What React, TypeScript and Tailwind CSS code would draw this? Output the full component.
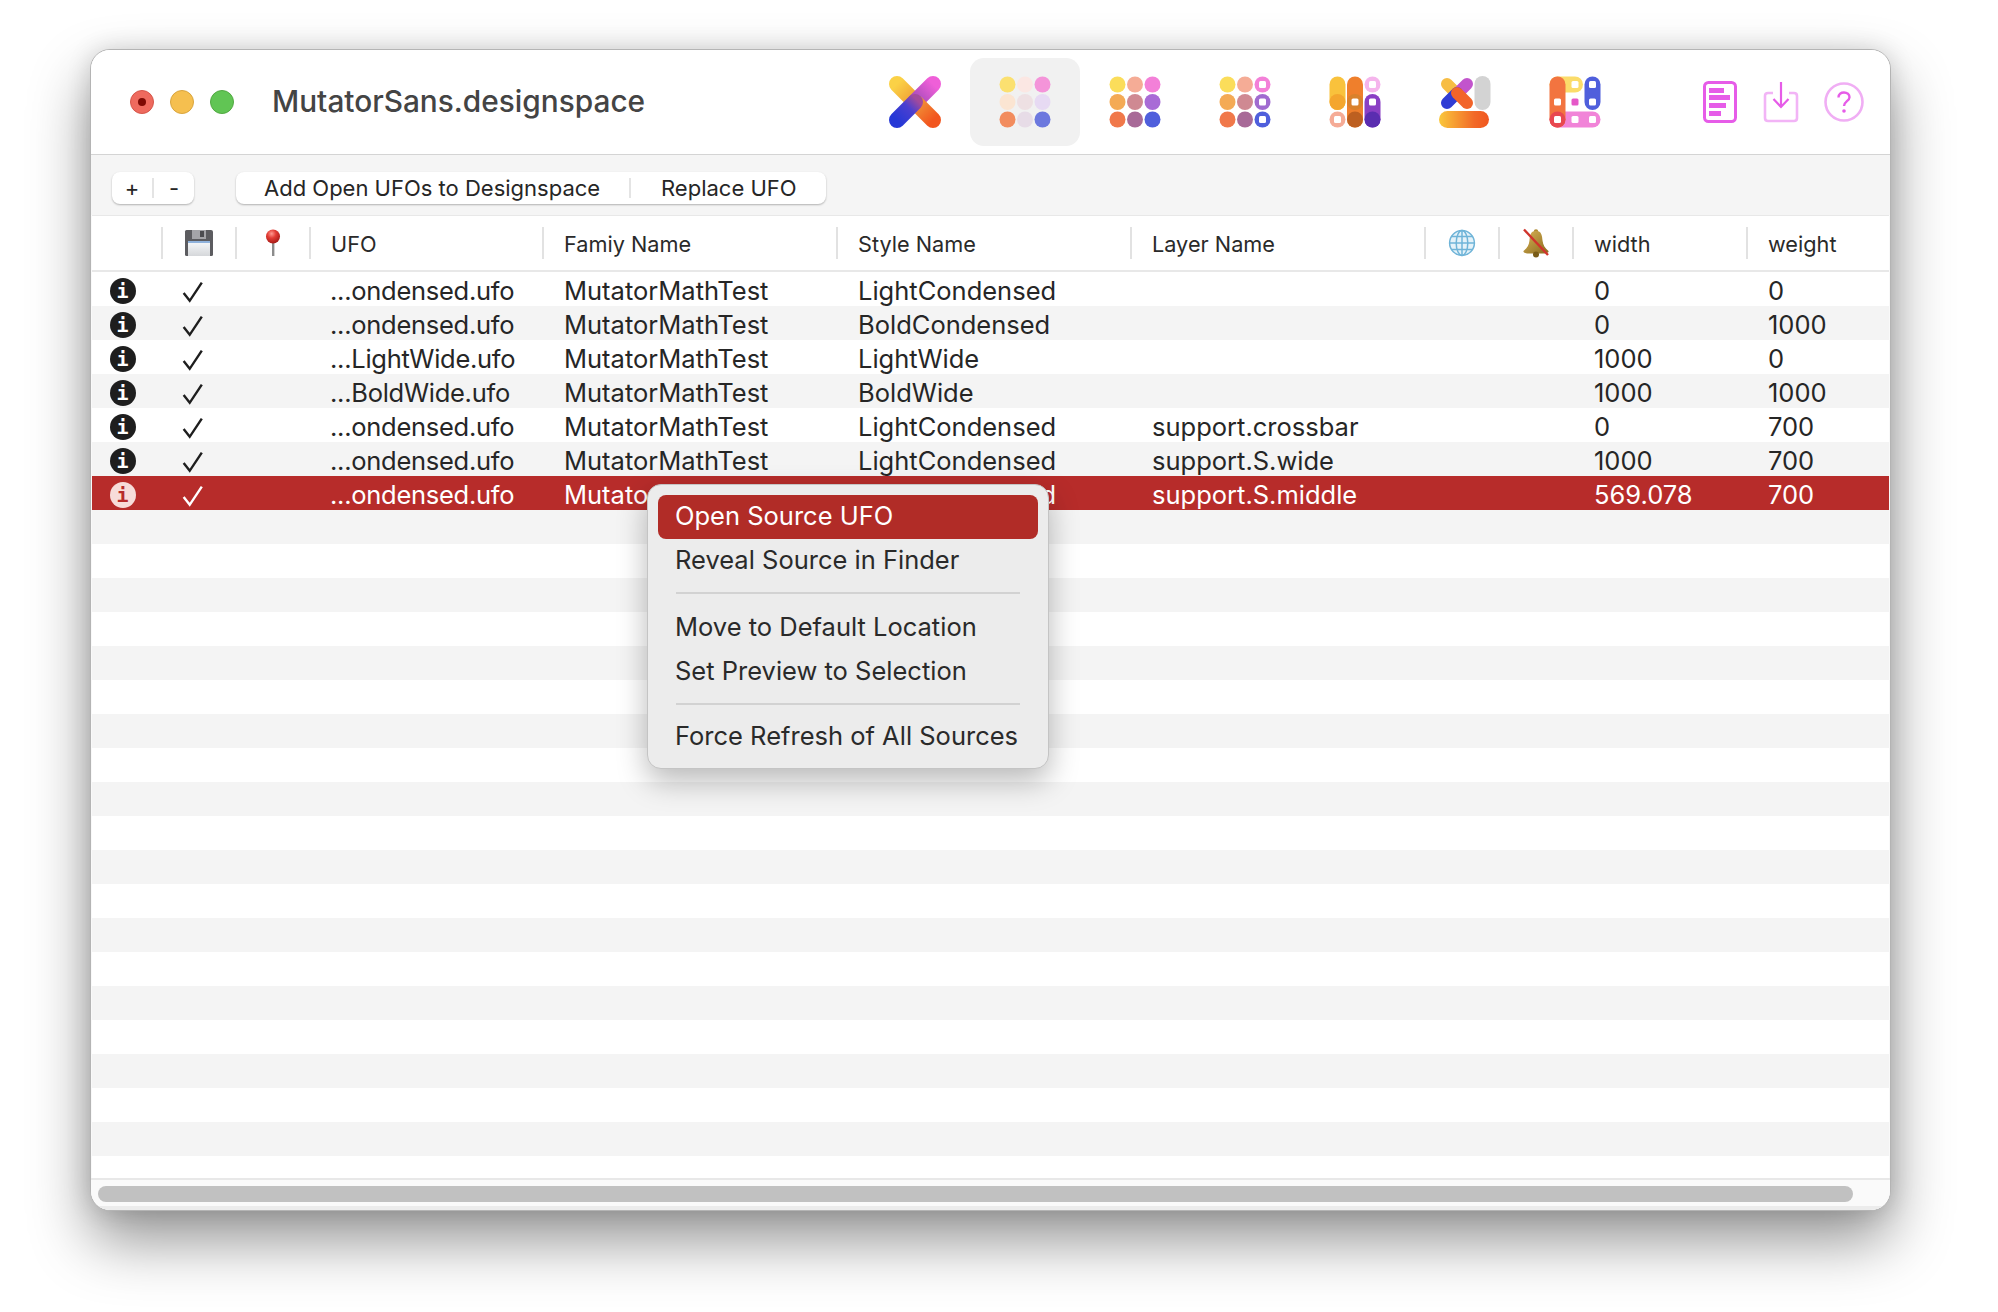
const sans = "font-['Inter','Liberation_Sans',sans-serif]"
const gridCols = 'grid-cols-[69px_74px_74px_233px_294px_294px_294px_74px_74px_174px_1fr]'

const sources = [
  ['...ondensed.ufo', 'MutatorMathTest', 'LightCondensed', '', '0', '0'],
  ['...ondensed.ufo', 'MutatorMathTest', 'BoldCondensed', '', '0', '1000'],
  ['...LightWide.ufo', 'MutatorMathTest', 'LightWide', '', '1000', '0'],
  ['...BoldWide.ufo', 'MutatorMathTest', 'BoldWide', '', '1000', '1000'],
  ['...ondensed.ufo', 'MutatorMathTest', 'LightCondensed', 'support.crossbar', '0', '700'],
  ['...ondensed.ufo', 'MutatorMathTest', 'LightCondensed', 'support.S.wide', '1000', '700'],
  ['...ondensed.ufo', 'MutatorMathTest', 'LightCondensed', 'support.S.middle', '569.078', '700'],
]

const DOTS = [8.5, 26, 43.5]

function Dots({ colors, rings = [] }: { colors: string[]; rings?: number[] }) {
  return (
    <svg width="52" height="52" viewBox="0 0 52 52">
      {colors.map((c, i) => {
        const x = DOTS[i % 3]
        const y = DOTS[Math.floor(i / 3)]
        return (
          <g key={i}>
            <circle cx={x} cy={y} r="8" fill={c} />
            {rings.includes(i) && <rect x={x - 3.5} y={y - 3.5} width="7" height="7" rx="1.5" fill="#fff" />}
          </g>
        )
      })}
    </svg>
  )
}

function Pill({ x1, y1, x2, y2, c, w = 16 }: { x1: number; y1: number; x2: number; y2: number; c: string; w?: number }) {
  return <line x1={x1} y1={y1} x2={x2} y2={y2} stroke={c} strokeWidth={w} strokeLinecap="round" />
}

function Hole({ x, y }: { x: number; y: number }) {
  return <rect x={x - 3.5} y={y - 3.5} width="7" height="7" rx="1.5" fill="#fff" />
}

function XLogo() {
  return (
    <svg width="52" height="52" viewBox="0 0 52 52">
      <defs>
        <linearGradient id="xa" gradientUnits="userSpaceOnUse" x1="8" y1="8" x2="26" y2="26">
          <stop offset="0" stopColor="#fbd146" />
          <stop offset="1" stopColor="#ef9a32" />
        </linearGradient>
        <linearGradient id="xb" gradientUnits="userSpaceOnUse" x1="44" y1="8" x2="26" y2="26">
          <stop offset="0" stopColor="#ef5fd8" />
          <stop offset="1" stopColor="#a04ab8" />
        </linearGradient>
        <linearGradient id="xc" gradientUnits="userSpaceOnUse" x1="8" y1="44" x2="28" y2="24">
          <stop offset="0" stopColor="#2638d6" />
          <stop offset="0.6" stopColor="#4a3fd0" />
          <stop offset="1" stopColor="#a24a9c" />
        </linearGradient>
        <linearGradient id="xd" gradientUnits="userSpaceOnUse" x1="44" y1="44" x2="26" y2="26">
          <stop offset="0" stopColor="#f2561f" />
          <stop offset="1" stopColor="#f09a3a" />
        </linearGradient>
      </defs>
      <Pill x1={8} y1={8} x2={26} y2={26} c="url(#xa)" />
      <Pill x1={44} y1={8} x2={26} y2={26} c="url(#xb)" />
      <Pill x1={44} y1={44} x2={27} y2={27} c="url(#xd)" />
      <Pill x1={8} y1={44} x2={26} y2={26} c="url(#xc)" />
    </svg>
  )
}

function Columns() {
  return (
    <svg width="52" height="52" viewBox="0 0 52 52">
      <Pill x1={8.5} y1={8.5} x2={8.5} y2={26} c="#f9c23c" />
      <circle cx={8.5} cy={26} r="8" fill="#f4a62e" />
      <circle cx={8.5} cy={43.5} r="8" fill="#f5ab96" />
      <Hole x={8.5} y={43.5} />
      <Pill x1={26} y1={8.5} x2={26} y2={43.5} c="#ef7f2c" />
      <circle cx={26} cy={26} r="8" fill="#d9812c" />
      <circle cx={26} cy={43.5} r="8" fill="#bd5f20" />
      <Hole x={26} y={26} />
      <circle cx={43.5} cy={8.5} r="8" fill="#f5b5ec" />
      <Hole x={43.5} y={8.5} />
      <Pill x1={43.5} y1={26} x2={43.5} y2={43.5} c="#8a3fc4" />
      <circle cx={43.5} cy={43.5} r="8" fill="#5a2db0" />
      <Hole x={43.5} y={26} />
    </svg>
  )
}

function XBars() {
  return (
    <svg width="52" height="52" viewBox="0 0 52 52">
      <defs>
        <linearGradient id="bar" x1="0" x2="1" y1="0" y2="0">
          <stop offset="0" stopColor="#fac83c" />
          <stop offset="0.7" stopColor="#f26a28" />
          <stop offset="1" stopColor="#f0561f" />
        </linearGradient>
      </defs>
      <Pill x1={8} y1={8} x2={18} y2={18} c="#f7bd44" w={12} />
      <Pill x1={28} y1={8} x2={18} y2={18} c="#c254cc" w={12} />
      <Pill x1={8} y1={27} x2={18} y2={17} c="#2f3cd4" w={12} />
      <Pill x1={28} y1={27} x2={18} y2={17} c="#f2642a" w={12} />
      <Pill x1={43.5} y1={8} x2={43.5} y2={26} c="#d3d3d3" />
      <rect x="0" y="35" width="50" height="17" rx="8.5" fill="url(#bar)" />
    </svg>
  )
}

function Blocks() {
  return (
    <svg width="52" height="52" viewBox="0 0 52 52">
      <Pill x1={26} y1={8.5} x2={8.5} y2={8.5} c="#fbdc6a" />
      <Pill x1={43.5} y1={8.5} x2={43.5} y2={26} c="#4f5fdc" />
      <Pill x1={8.5} y1={43.5} x2={43.5} y2={43.5} c="#f184d8" />
      <Pill x1={8.5} y1={8.5} x2={8.5} y2={43.5} c="#f27440" />
      <circle cx={8.5} cy={43.5} r="8" fill="#e84850" />
      <Hole x={26} y={8.5} />
      <Hole x={43.5} y={8.5} />
      <Hole x={43.5} y={26} />
      <Hole x={8.5} y={26} />
      <Hole x={8.5} y={43.5} />
      <Hole x={26} y={43.5} />
      <Hole x={43.5} y={43.5} />
      <rect x="22.5" y="22.5" width="7" height="7" rx="1.5" fill="#e558c8" />
    </svg>
  )
}

function ToolTile({ active, children }: { active?: boolean; children: React.ReactNode }) {
  return (
    <div className={`w-[110px] h-[88px] rounded-[14px] flex items-center justify-center ${active ? 'bg-[#f1f1f1]' : ''}`}>
      <div className="blur-[0.6px]">{children}</div>
    </div>
  )
}

function FloppyIcon() {
  return (
    <svg width="30" height="28" viewBox="0 0 30 28">
      <defs>
        <linearGradient id="fl" x1="0" x2="0" y1="0" y2="1">
          <stop offset="0" stopColor="#f8fafc" />
          <stop offset="1" stopColor="#d5d7da" />
        </linearGradient>
      </defs>
      <path d="M1 2.5 Q1 1 2.5 1 H27 Q29 1 29 3 V25.5 Q29 27 27.5 27 H2.5 Q1 27 1 25.5 Z" fill="#5c5c60" />
      <rect x="8" y="1" width="14" height="9" fill="#a4a4a8" />
      <rect x="16" y="2" width="4" height="6" fill="#4c4c50" />
      <rect x="4" y="12" width="22" height="15" fill="url(#fl)" />
      <rect x="4" y="12" width="22" height="2" fill="#8fb2dc" />
    </svg>
  )
}

function PinIcon() {
  return (
    <svg width="18" height="28" viewBox="0 0 18 28">
      <defs>
        <radialGradient id="pin" cx="0.4" cy="0.3" r="0.7">
          <stop offset="0" stopColor="#ff9a90" />
          <stop offset="0.45" stopColor="#e23c34" />
          <stop offset="1" stopColor="#a81c18" />
        </radialGradient>
      </defs>
      <rect x="8" y="12" width="2.4" height="15" fill="#8c8c8c" />
      <circle cx="9" cy="7.5" r="7" fill="url(#pin)" />
    </svg>
  )
}

function GlobeIcon() {
  return (
    <svg width="28" height="28" viewBox="0 0 28 28" fill="none" stroke="#6fb4d8" strokeWidth="1.5">
      <circle cx="14" cy="14" r="12.4" fill="#e4f2f9" />
      <ellipse cx="14" cy="14" rx="5.8" ry="12.4" />
      <line x1="14" y1="1.6" x2="14" y2="26.4" />
      <line x1="1.6" y1="14" x2="26.4" y2="14" />
      <path d="M3.4 7.6 H24.6 M3.4 20.4 H24.6" />
    </svg>
  )
}

function BellOffIcon() {
  return (
    <svg width="30" height="30" viewBox="0 0 30 30">
      <defs>
        <linearGradient id="bell" x1="0" x2="1" y1="0" y2="1">
          <stop offset="0" stopColor="#d8b255" />
          <stop offset="1" stopColor="#8a6a1e" />
        </linearGradient>
      </defs>
      <circle cx="15" cy="3.5" r="2.2" fill="#b08a30" />
      <path d="M15 3 C9 3 9 8 8.4 13 C8 17 6 20 2.5 23 C2 24.5 4 25 6 25.5 H24 C26 25 28 24.5 27.5 23 C24 20 22 17 21.6 13 C21 8 21 3 15 3 Z" fill="url(#bell)" />
      <circle cx="15" cy="26.5" r="3" fill="#7a5c18" />
      <line x1="3" y1="1.5" x2="27" y2="27" stroke="#d0342c" strokeWidth="2.4" />
    </svg>
  )
}

function InfoBadge({ selected }: { selected: boolean }) {
  return (
    <span className={`w-[26px] h-[26px] rounded-full flex items-center justify-center text-[20px] font-bold font-['DejaVu_Sans_Mono',monospace] leading-none ${selected ? 'bg-[#f7dcd9] text-[#b72c2a]' : 'bg-[#1e1e1e] text-white'}`}>
      i
    </span>
  )
}

function Check({ selected }: { selected: boolean }) {
  return (
    <svg width="22" height="22" viewBox="0 0 20 20" fill="none" stroke={selected ? '#fff' : '#1e1e1e'} strokeWidth="2.2">
      <path d="M1.5 11 L7 18 L18 1.5" />
    </svg>
  )
}

function HeaderCell({ children, center }: { children?: React.ReactNode; center?: boolean }) {
  return (
    <div className="flex items-center h-full">
      <span className="w-[2px] h-[32px] bg-[#e2e2e2] shrink-0" />
      {center ? (
        <span className="flex-1 flex items-center justify-center">{children}</span>
      ) : (
        <span className="ml-[20px]">{children}</span>
      )}
    </div>
  )
}

function Button({ children, className = '' }: { children: React.ReactNode; className?: string }) {
  return (
    <div className={`h-[32px] rounded-[8px] bg-white shadow-[0_1px_2px_rgba(0,0,0,0.28)] flex items-center text-[22px] text-[#262626] ${className}`}>
      {children}
    </div>
  )
}

function MenuItem({ children, active }: { children: React.ReactNode; active?: boolean }) {
  return (
    <div className={`h-[44px] rounded-[8px] pl-[17px] pb-[2px] flex items-center ${active ? 'bg-[#b12c27] text-white' : 'text-[#2a2a2a]'}`}>
      {children}
    </div>
  )
}

export default function App() {
  const yellowGrid = ['#fbe070', '#fbe7e3', '#f494d9', '#fbe5d2', '#eee0e3', '#e7daf3', '#f28c5e', '#e7dce7', '#6c78de']
  const fullGrid = ['#fbdd5a', '#f5ac96', '#f380d8', '#f4aa55', '#cf8992', '#a86bd6', '#f0784a', '#a86a98', '#4f5fdc']

  return (
    <div className={`w-[1998px] h-[1312px] overflow-hidden bg-white pt-[49px] pl-[90px] ${sans}`}>
      <div className="relative w-[1801px] h-[1162px] flex flex-col rounded-[20px] border border-[#b4b4b4] bg-[#f9f9f9] overflow-hidden shadow-[0_30px_60px_rgba(0,0,0,0.42),0_0_24px_rgba(0,0,0,0.14)]">
        {/* title bar */}
        <div className="h-[105px] shrink-0 bg-white border-b border-[#d4d4d4] flex items-center">
          <div className="ml-[39px] flex gap-[16px]">
            <span className="w-[24px] h-[24px] rounded-full bg-[#ee6a5e] border border-[#d5564a] flex items-center justify-center">
              <span className="w-[8px] h-[8px] rounded-full bg-[#7e0a04]" />
            </span>
            <span className="w-[24px] h-[24px] rounded-full bg-[#f5bf4f] border border-[#d9a53e]" />
            <span className="w-[24px] h-[24px] rounded-full bg-[#61c554] border border-[#52a942]" />
          </div>
          <div className="ml-[38px] w-[588px] pb-[2px] text-[29.8px] font-medium text-[#444444] whitespace-nowrap">MutatorSans.designspace</div>
          <div className="flex">
            <ToolTile><XLogo /></ToolTile>
            <ToolTile active><Dots colors={yellowGrid} /></ToolTile>
            <ToolTile><Dots colors={fullGrid} /></ToolTile>
            <ToolTile><Dots colors={['#fbdd5a', '#f5ac96', '#f380d8', '#f4aa55', '#cf8992', '#a06bd0', '#f0784a', '#a86a98', '#4f5fdc']} rings={[2, 5, 8]} /></ToolTile>
            <ToolTile><Columns /></ToolTile>
            <ToolTile><XBars /></ToolTile>
            <ToolTile><Blocks /></ToolTile>
          </div>
          <div className="ml-[73px] flex items-center">
            <svg width="34" height="42" viewBox="0 0 34 42">
              <rect x="1.5" y="1.5" width="31" height="39" rx="4" fill="none" stroke="#e65ce8" strokeWidth="3" />
              <rect x="6" y="7" width="15" height="5" fill="#e65ce8" />
              <rect x="6" y="14" width="21" height="5" fill="#e65ce8" />
              <rect x="6" y="22" width="17" height="5" fill="#e65ce8" />
              <rect x="6" y="30" width="12" height="5" fill="#e65ce8" />
            </svg>
            <svg className="ml-[26px]" width="36" height="42" viewBox="0 0 36 42" fill="none">
              <path d="M10 12 H5 Q2 12 2 15 V37 Q2 40 5 40 H31 Q34 40 34 37 V15 Q34 12 31 12 H26" stroke="#f2b4f6" strokeWidth="2.6" />
              <path d="M18 1 V25 M10.5 18 L18 26 L25.5 18" stroke="#e65ce8" strokeWidth="2.2" />
            </svg>
            <svg className="ml-[25px]" width="40" height="40" viewBox="0 0 40 40" fill="none">
              <circle cx="20" cy="20" r="18.5" stroke="#f0aef4" strokeWidth="2.6" />
              <path d="M14.5 15.5 C14.5 12 17 10.5 20 10.5 C23 10.5 25.5 12.4 25.5 15.2 C25.5 19 20 19.5 20 24" stroke="#e65ce8" strokeWidth="2.4" />
              <circle cx="20" cy="29" r="1.8" fill="#e65ce8" />
            </svg>
          </div>
        </div>

        {/* toolbar */}
        <div className="h-[60px] shrink-0 bg-[#f5f5f5] flex items-center gap-[42px] pl-[21px] pt-[6px]">
          <Button className="w-[82px]">
            <span className="w-[40px] text-center">+</span>
            <span className="w-[2px] h-[20px] bg-[#e4e4e4]" />
            <span className="flex-1 text-center">-</span>
          </Button>
          <Button className="w-[590px]">
            <span className="w-[393px] pl-[28px] whitespace-nowrap">Add Open UFOs to Designspace</span>
            <span className="w-[2px] h-[20px] bg-[#e4e4e4]" />
            <span className="pl-[30px] whitespace-nowrap">Replace UFO</span>
          </Button>
        </div>

        {/* table */}
        <div className="flex-1 min-h-0 mx-[1px] bg-white flex flex-col overflow-hidden border-t border-[#e8e8e8]">
          <div className={`grid ${gridCols} h-[56px] shrink-0 items-center border-b-2 border-[#e8e8e8] text-[21.7px] text-[#2a2a2a]`}>
            <div />
            <HeaderCell center><FloppyIcon /></HeaderCell>
            <HeaderCell center><PinIcon /></HeaderCell>
            <HeaderCell><span className="pt-[3px] block">UFO</span></HeaderCell>
            <HeaderCell><span className="pt-[3px] block">Famiy Name</span></HeaderCell>
            <HeaderCell><span className="pt-[3px] block">Style Name</span></HeaderCell>
            <HeaderCell><span className="pt-[3px] block">Layer Name</span></HeaderCell>
            <HeaderCell center><GlobeIcon /></HeaderCell>
            <HeaderCell center><BellOffIcon /></HeaderCell>
            <HeaderCell><span className="pt-[3px] block">width</span></HeaderCell>
            <HeaderCell><span className="pt-[3px] block">weight</span></HeaderCell>
          </div>
          <div className="flex-1 min-h-0 overflow-hidden">
            {Array.from({ length: 27 }, (_, i) => {
              const row = sources[i]
              const selected = i === 6
              const bg = selected ? 'bg-[#b72c2a] text-white' : i % 2 ? 'bg-[#f4f4f4] text-[#262626]' : 'bg-white text-[#262626]'
              if (!row) return <div key={i} className={`h-[34px] ${bg}`} />
              return (
                <div key={i} className={`grid ${gridCols} h-[34px] items-center text-[25.5px] whitespace-nowrap ${bg}`}>
                  <div className="flex justify-center pr-[8px] pb-[2px]"><InfoBadge selected={selected} /></div>
                  <div className="flex justify-center pr-[10px]"><Check selected={selected} /></div>
                  <div />
                  <div className="pl-[21px] pb-[2px] tracking-[-0.27px]">{row[0]}</div>
                  <div className="pl-[22px] pb-[2px]">{row[1]}</div>
                  <div className="pl-[22px] pb-[2px]">{row[2]}</div>
                  <div className="pl-[22px] pb-[2px]">{row[3]}</div>
                  <div />
                  <div />
                  <div className="pl-[22px] pb-[2px]">{row[4]}</div>
                  <div className="pl-[22px] pb-[2px]">{row[5]}</div>
                </div>
              )
            })}
          </div>
        </div>

        {/* horizontal scroller */}
        <div className="h-[32px] shrink-0 border-t-2 border-[#e8e8e8] bg-[#fafafa] pt-[6px] pl-[7px] border-b-[4px] border-b-[#ececec]">
          <div className="w-[1755px] h-[16px] rounded-full bg-[#c1c1c1]" />
        </div>

        {/* context menu */}
        <div className="absolute left-[556px] top-[434px] w-[402px] h-[285px] rounded-[14px] border border-[#c4c4c4] bg-[#ececec] p-[10px] text-[25.5px] shadow-[0_12px_30px_rgba(0,0,0,0.28)]">
          <MenuItem active>Open Source UFO</MenuItem>
          <MenuItem>Reveal Source in Finder</MenuItem>
          <div className="h-[2px] bg-[#d2d2d2] mx-[18px] mt-[9px] mb-[12px]" />
          <MenuItem>Move to Default Location</MenuItem>
          <MenuItem>Set Preview to Selection</MenuItem>
          <div className="h-[2px] bg-[#d2d2d2] mx-[18px] mt-[9px] mb-[10px]" />
          <MenuItem>Force Refresh of All Sources</MenuItem>
        </div>
      </div>
    </div>
  )
}
